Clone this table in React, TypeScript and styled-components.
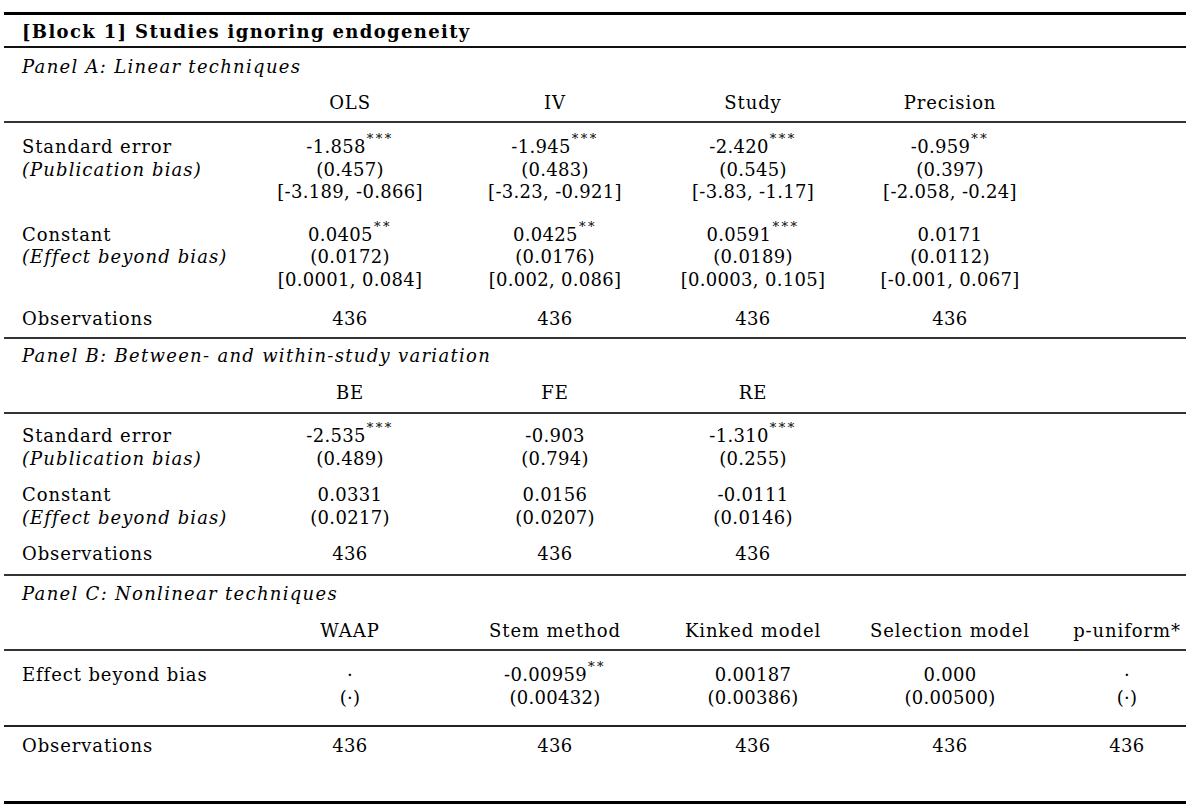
import styled, { createGlobalStyle } from "styled-components";

const GlobalStyle = createGlobalStyle`
  html, body {
    margin: 0;
    padding: 0;
    background: #fff;
  }
  body {
    font-family: "DejaVu Serif", "Liberation Serif", serif;
    color: #000;
    font-size: 18px;
    letter-spacing: 0.9px;
  }
`;

type Val = { v: string; sig?: string };
type Block = { label: string; note?: string; rows: Val[][]; space: number };
type Panel = {
  title: string;
  headers: string[];
  blocks: Block[];
  obs: string[];
  obsSpace: number;
  obsRuled?: boolean;
  line: number;
  top: number;
  bottom: number;
  nameLift: number;
  headLift: number;
};

const panels: Panel[] = [
  {
    title: "Panel A: Linear techniques",
    headers: ["OLS", "IV", "Study", "Precision"],
    nameLift: 2,
    headLift: 2,
    line: 22.5,
    top: 13,
    bottom: 6,
    obsSpace: 17,
    blocks: [
      {
        label: "Standard error",
        note: "(Publication bias)",
        space: 0,
        rows: [
          [{ v: "-1.858", sig: "***" }, { v: "(0.457)" }, { v: "[-3.189, -0.866]" }],
          [{ v: "-1.945", sig: "***" }, { v: "(0.483)" }, { v: "[-3.23, -0.921]" }],
          [{ v: "-2.420", sig: "***" }, { v: "(0.545)" }, { v: "[-3.83, -1.17]" }],
          [{ v: "-0.959", sig: "**" }, { v: "(0.397)" }, { v: "[-2.058, -0.24]" }],
        ],
      },
      {
        label: "Constant",
        note: "(Effect beyond bias)",
        space: 20,
        rows: [
          [{ v: "0.0405", sig: "**" }, { v: "(0.0172)" }, { v: "[0.0001, 0.084]" }],
          [{ v: "0.0425", sig: "**" }, { v: "(0.0176)" }, { v: "[0.002, 0.086]" }],
          [{ v: "0.0591", sig: "***" }, { v: "(0.0189)" }, { v: "[0.0003, 0.105]" }],
          [{ v: "0.0171" }, { v: "(0.0112)" }, { v: "[-0.001, 0.067]" }],
        ],
      },
    ],
    obs: ["436", "436", "436", "436"],
  },
  {
    title: "Panel B: Between- and within-study variation",
    headers: ["BE", "FE", "RE"],
    nameLift: 0,
    headLift: 0,
    line: 23.5,
    top: 10,
    bottom: 9,
    obsSpace: 12,
    blocks: [
      {
        label: "Standard error",
        note: "(Publication bias)",
        space: 0,
        rows: [
          [{ v: "-2.535", sig: "***" }, { v: "(0.489)" }],
          [{ v: "-0.903" }, { v: "(0.794)" }],
          [{ v: "-1.310", sig: "***" }, { v: "(0.255)" }],
        ],
      },
      {
        label: "Constant",
        note: "(Effect beyond bias)",
        space: 12,
        rows: [
          [{ v: "0.0331" }, { v: "(0.0217)" }],
          [{ v: "0.0156" }, { v: "(0.0207)" }],
          [{ v: "-0.0111" }, { v: "(0.0146)" }],
        ],
      },
    ],
    obs: ["436", "436", "436"],
  },
  {
    title: "Panel C: Nonlinear techniques",
    headers: ["WAAP", "Stem method", "Kinked model", "Selection model", "p-uniform*"],
    nameLift: 1,
    headLift: 2,
    line: 23,
    top: 12,
    bottom: 16,
    obsSpace: 0,
    obsRuled: true,
    blocks: [
      {
        label: "Effect beyond bias",
        space: 0,
        rows: [
          [{ v: "·" }, { v: "(·)" }],
          [{ v: "-0.00959", sig: "**" }, { v: "(0.00432)" }],
          [{ v: "0.00187" }, { v: "(0.00386)" }],
          [{ v: "0.000" }, { v: "(0.00500)" }],
          [{ v: "·" }, { v: "(·)" }],
        ],
      },
    ],
    obs: ["436", "436", "436", "436", "436"],
  },
];

const Sheet = styled.div`
  width: 1182px;
  margin-left: 4px;
  padding-top: 12px;
`;

const Rule = styled.div<{ $weight: number; $tone?: string }>`
  height: ${(p) => p.$weight}px;
  background: ${(p) => p.$tone ?? "#000"};
`;

const Title = styled.div`
  height: 31px;
  padding-top: 2px;
  box-sizing: border-box;
  line-height: 29px;
  padding-left: 18px;
  font-weight: bold;
  letter-spacing: 1.35px;
`;

const PanelName = styled.div<{ $lift: number }>`
  height: 35px;
  box-sizing: border-box;
  padding-top: ${(p) => p.$lift}px;
  line-height: 34px;
  padding-left: 18px;
  font-style: italic;
  letter-spacing: 1.3px;
`;

const Grid = styled.div<{ $space?: number; $height?: number; $lift?: number }>`
  display: grid;
  grid-template-columns: 244px 204px 206px 190px 204px 134px;
  margin-top: ${(p) => p.$space ?? 0}px;
  padding-top: ${(p) => p.$lift ?? 0}px;
  line-height: ${(p) => p.$height ?? 22.5}px;
`;

const Body = styled.div<{ $top: number; $bottom: number }>`
  padding-top: ${(p) => p.$top}px;
  padding-bottom: ${(p) => p.$bottom}px;
`;

const Label = styled.div`
  display: flex;
  flex-direction: column;
  padding-left: 18px;
  white-space: nowrap;
`;

const Note = styled.span`
  font-style: italic;
  letter-spacing: 1.1px;
`;

const Cell = styled.div<{ $last?: boolean }>`
  display: flex;
  flex-direction: column;
  align-items: center;
  white-space: nowrap;
  padding-left: ${(p) => (p.$last ? 16 : 0)}px;
`;

const Figure = styled.span`
  letter-spacing: 0.3px;
`;

const Sup = styled.sup`
  font-size: 13px;
  line-height: 0;
  vertical-align: 10px;
  letter-spacing: 2.5px;
  margin-left: 1px;
`;

function Value({ v, sig }: Val) {
  return (
    <Figure>
      {v}
      {sig ? <Sup>{sig}</Sup> : null}
    </Figure>
  );
}

function ObsRow({ obs, space, height }: { obs: string[]; space?: number; height?: number }) {
  return (
    <Grid $space={space} $height={height}>
      <Label>Observations</Label>
      {obs.map((o, i) => (
        <Cell key={i} $last={i === 4}>
          <Figure>{o}</Figure>
        </Cell>
      ))}
    </Grid>
  );
}

function PanelView({ panel }: { panel: Panel }) {
  return (
    <>
      <PanelName $lift={panel.nameLift}>{panel.title}</PanelName>
      <Grid $height={38 - panel.headLift} $lift={panel.headLift}>
        <Label />
        {panel.headers.map((h, i) => (
          <Cell key={h} $last={i === 4}>
            {h}
          </Cell>
        ))}
      </Grid>
      <Rule $weight={2} $tone="#333" />
      <Body $top={panel.top} $bottom={panel.bottom}>
        {panel.blocks.map((b) => (
          <Grid key={b.label} $space={b.space} $height={panel.line}>
            <Label>
              <span>{b.label}</span>
              {b.note ? <Note>{b.note}</Note> : null}
            </Label>
            {b.rows.map((col, i) => (
              <Cell key={i} $last={i === 4}>
                {col.map((val, j) => (
                  <Value key={j} {...val} />
                ))}
              </Cell>
            ))}
          </Grid>
        ))}
        {!panel.obsRuled ? (
          <ObsRow obs={panel.obs} space={panel.obsSpace} height={panel.line} />
        ) : null}
      </Body>
      {panel.obsRuled ? (
        <>
          <Rule $weight={2} $tone="#222" />
          <Body $top={8} $bottom={43}>
            <ObsRow obs={panel.obs} />
          </Body>
        </>
      ) : null}
    </>
  );
}

export default function App() {
  return (
    <>
      <GlobalStyle />
      <Sheet>
        <Rule $weight={3} />
        <Title>[Block 1] Studies ignoring endogeneity</Title>
        <Rule $weight={2} $tone="#111" />
        {panels.map((p, i) => (
          <div key={p.title}>
            {i > 0 ? <Rule $weight={2} $tone="#333" /> : null}
            <PanelView panel={p} />
          </div>
        ))}
        <Rule $weight={3} />
      </Sheet>
    </>
  );
}
